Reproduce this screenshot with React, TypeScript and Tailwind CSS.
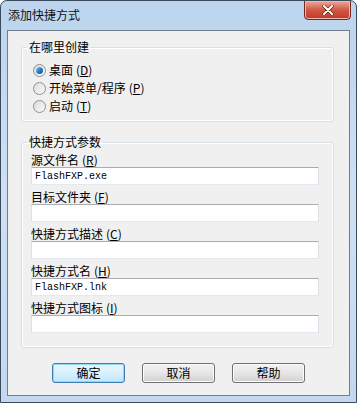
import React from 'react';

const cjk = { fontFamily: '"Noto Sans CJK SC", "Noto Sans", sans-serif' };

const Key: React.FC<{ k: string }> = ({ k }) => (
  <span className="ml-[3px]">
    (<span className="underline underline-offset-[1px]">{k}</span>)
  </span>
);

const Radio: React.FC<{ checked?: boolean; label: string; k: string }> = ({ checked, label, k }) => (
  <label className="flex items-center h-[18px] text-[12px] leading-[14px] text-black">
    <span className="w-[13px] h-[13px] rounded-full border border-[#8e8f8f] bg-gradient-to-br from-[#dcdcdc] to-[#fbfbfb] flex items-center justify-center mr-[3px]">
      {checked && (
        <span className="w-[7px] h-[7px] rounded-full bg-gradient-to-br from-[#8fd0f5] via-[#2a7fc4] to-[#0d4d8c]" />
      )}
    </span>
    {label}
    <Key k={k} />
  </label>
);

const Field: React.FC<{ label: string; k: string; value?: string }> = ({ label, k, value }) => (
  <div className="flex flex-col">
    <div className="h-[14px] leading-[14px] text-[12px] text-black">
      {label}
      <Key k={k} />
    </div>
    <input
      readOnly
      value={value ?? ''}
      className="w-[288px] h-[18px] bg-white border border-[#dbdfe6] border-t-[#abadb3] border-b-[#e3e9ef] px-[3px] text-[10px] text-black outline-none"
      style={{ fontFamily: '"Liberation Mono", monospace' }}
    />
  </div>
);

const Btn: React.FC<{ label: string; primary?: boolean }> = ({ label, primary }) => (
  <button
    className={
      primary
        ? 'w-[73px] h-[20px] rounded-[3px] border border-[#3c7fb1] bg-gradient-to-b from-[#eaf6fd] via-[#d9f0fc] to-[#bee6fd] text-[12px] text-black shadow-[0_0_0_1px_#92d7f6_inset]'
        : 'w-[73px] h-[20px] rounded-[3px] border border-[#707070] bg-gradient-to-b from-[#f2f2f2] via-[#e6e6e6] to-[#d0d0d0] text-[12px] text-black shadow-[0_0_0_1px_#fcfcfc_inset]'
    }
  >
    {label}
  </button>
);

export default function App() {
  return (
    <div className="w-[357px] h-[403px] flex flex-col border border-[#3b4a5c] rounded-t-[7px] bg-gradient-to-b from-[#bcd4ee] via-[#cfe0f3] to-[#c3d8ef] overflow-hidden" style={cjk}>
      <div className="h-[29px] flex items-start justify-between">
        <div className="pl-[7px] pt-[6px] text-[12px] leading-[16px] text-[#111]">添加快捷方式</div>
        <div className="mr-[5px] -mt-[1px] w-[47px] h-[20px] rounded-b-[4px] border border-[#6d2b22] bg-gradient-to-b from-[#e9a99c] via-[#d0573f] to-[#c0392b] flex items-center justify-center shadow-[0_0_0_1px_#f1b7aa_inset]">
          <svg width="12" height="10" viewBox="0 0 12 10">
            <path d="M2 1 L10 9 M10 1 L2 9" stroke="#5a1c14" strokeWidth="3.2" strokeLinecap="round" />
            <path d="M2 1 L10 9 M10 1 L2 9" stroke="#ffffff" strokeWidth="2" strokeLinecap="round" />
          </svg>
        </div>
      </div>

      <div className="mx-[6px] h-[366px] border border-[#6f7f90] bg-[#f0f0f0] flex flex-col">
        <fieldset className="ml-[13px] mt-[8px] w-[313px] border border-[#d5dfe5] rounded-[3px] pl-[11px] pt-[6px] pb-[6px] shadow-[0_0_0_1px_#ffffff_inset]">
          <legend className="-ml-[6px] px-[2px] h-[16px] leading-[16px] text-[12px] text-black">在哪里创建</legend>
          <Radio checked label="桌面" k="D" />
          <Radio label="开始菜单/程序" k="P" />
          <Radio label="启动" k="T" />
        </fieldset>

        <fieldset className="ml-[13px] mt-[12px] w-[313px] border border-[#d5dfe5] rounded-[3px] pl-[9px] pt-[3px] pb-[14px] flex flex-col gap-[5px] shadow-[0_0_0_1px_#ffffff_inset]">
          <legend className="-ml-[4px] px-[2px] h-[16px] leading-[16px] text-[12px] text-black">快捷方式参数</legend>
          <Field label="源文件名" k="R" value="FlashFXP.exe" />
          <Field label="目标文件夹" k="F" />
          <Field label="快捷方式描述" k="C" />
          <Field label="快捷方式名" k="H" value="FlashFXP.lnk" />
          <Field label="快捷方式图标" k="I" />
        </fieldset>

        <div className="mt-[15px] flex justify-center gap-[17px]">
          <Btn primary label="确定" />
          <Btn label="取消" />
          <Btn label="帮助" />
        </div>
      </div>
    </div>
  );
}
